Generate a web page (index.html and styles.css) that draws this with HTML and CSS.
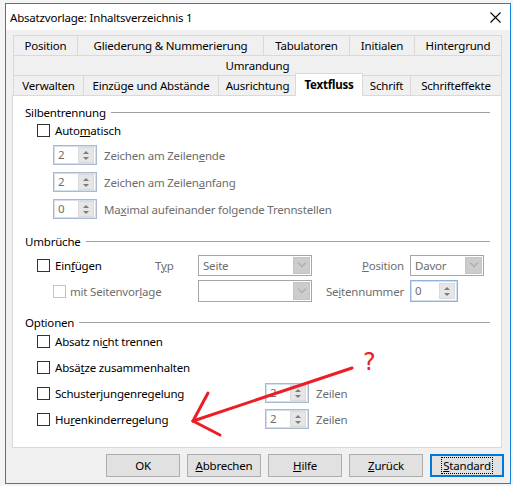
FILE: index.html
```html
<!DOCTYPE html>
<html lang="de">
<head>
<meta charset="utf-8">
<title>Absatzvorlage</title>
<link rel="stylesheet" href="styles.css">
</head>
<body>
<div class="dialog">
  <div class="titlebar">
    <span class="title">Absatzvorlage: Inhaltsverzeichnis 1</span>
    <svg class="close" viewBox="0 0 11 11" width="11" height="11"><path d="M0.5 0.5L10.5 10.5M10.5 0.5L0.5 10.5" stroke="#000" stroke-width="1.1" fill="none"/></svg>
  </div>
  <div class="body">
    <div class="tabs">
      <div class="tabrow r1">
        <div class="tab">Position</div>
        <div class="tab">Gliederung &amp; Nummerierung</div>
        <div class="tab">Tabulatoren</div>
        <div class="tab">Initialen</div>
        <div class="tab">Hintergrund</div>
      </div>
      <div class="tabrow r2">
        <div class="tab">Umrandung</div>
      </div>
      <div class="tabrow r3">
        <div class="tab">Verwalten</div>
        <div class="tab">Einzüge und Abstände</div>
        <div class="tab">Ausrichtung</div>
        <div class="tab sel">Textfluss</div>
        <div class="tab">Schrift</div>
        <div class="tab">Schrifteffekte</div>
      </div>
    </div>
    <div class="panel">
      <div class="group g1">
        <div class="legend"><span>Silbentrennung</span><i class="rule"></i></div>
        <label class="check first"><span class="cb"></span><span>Auto<u>m</u>atisch</span></label>
        <div class="spinrow">
          <div class="spin dis"><span class="val">2</span><span class="btns"><i class="up"></i><i class="dn"></i></span></div>
          <span class="dim">Zeichen am Zeilen<u>e</u>nde</span>
        </div>
        <div class="spinrow">
          <div class="spin dis"><span class="val">2</span><span class="btns"><i class="up"></i><i class="dn"></i></span></div>
          <span class="dim">Zeichen am Zeilen<u>a</u>nfang</span>
        </div>
        <div class="spinrow">
          <div class="spin dis"><span class="val">0</span><span class="btns"><i class="up"></i><i class="dn"></i></span></div>
          <span class="dim">Ma<u>x</u>imal aufeinander folgende Trennstellen</span>
        </div>
      </div>

      <div class="group g2">
        <div class="legend"><span>Umbrüche</span><i class="rule"></i></div>
        <div class="breaks">
          <label class="check"><span class="cb"></span><span>Ein<u>f</u>ügen</span></label>
          <span class="dim typ">T<u>y</u>p</span>
          <div class="combo"><span class="ctext">Seite</span><span class="drop"><i></i></span></div>
          <span class="dim rlabel"><u>P</u>osition</span>
          <div class="combo pos"><span class="ctext">Davor</span><span class="drop"><i></i></span></div>

          <label class="check sub"><span class="cb off"></span><span class="dim">mit Seitenvor<u>l</u>age</span></label>
          <div class="combo tall"><span class="ctext"></span><span class="drop"><i></i></span></div>
          <span class="dim rlabel">Se<u>i</u>tennummer</span>
          <div class="spin focus num"><span class="val">0</span><span class="btns"><i class="up"></i><i class="dn"></i></span></div>
        </div>
      </div>

      <div class="group g3">
        <div class="legend"><span>Optionen</span><i class="rule"></i></div>
        <div class="opts">
          <label class="check"><span class="cb"></span><span>Absatz ni<u>c</u>ht trennen</span></label>
          <label class="check"><span class="cb"></span><span>Absä<u>t</u>ze zusammenhalten</span></label>
          <label class="check"><span class="cb"></span><span>Schusterjungenregelung</span></label>
          <div class="spin dis"><span class="val">2</span><span class="btns"><i class="up"></i><i class="dn"></i></span></div>
          <span class="dim">Zeilen</span>
          <label class="check"><span class="cb"></span><span>Hu<u>r</u>enkinderregelung</span></label>
          <div class="spin dis"><span class="val">2</span><span class="btns"><i class="up"></i><i class="dn"></i></span></div>
          <span class="dim">Zeilen</span>
        </div>
      </div>
    </div>
    <div class="buttons">
      <button class="btn">OK</button>
      <button class="btn"><u>A</u>bbrechen</button>
      <button class="btn"><u>H</u>ilfe</button>
      <button class="btn"><u>Z</u>urück</button>
      <button class="btn default"><span class="focusring"><u>S</u>tandard</span></button>
    </div>
  </div>
</div>
<svg class="annot" width="513" height="486" viewBox="0 0 513 486">
  <g stroke="#ee1c25" stroke-width="3" stroke-linecap="round" fill="none">
    <path d="M352 368L193 421"/>
    <path d="M193 421L208 393"/>
    <path d="M193 421L220 435"/>
  </g>
  <text x="363" y="370" class="qmark">?</text>
</svg>
</body>
</html>
```
FILE: styles.css
```css
* { box-sizing: border-box; }
html, body { margin: 0; padding: 0; }
body {
  width: 513px;
  height: 486px;
  overflow: hidden;
  position: relative;
  background: #f4f4f4;
  font-family: "Noto Sans", "Open Sans", sans-serif;
  font-size: 11.5px;
  letter-spacing: -0.2px;
  color: #000;
}
u { text-decoration: underline; text-underline-offset: 1px; }

.dialog {
  margin: 3px 0 0 5px;
  width: 506px;
  height: 481px;
  border: 1px solid #1883d7;
  background: #f0f0f0;
  display: flex;
  flex-direction: column;
}
.titlebar {
  height: 26px;
  flex: none;
  background: #fff;
  display: flex;
  align-items: center;
  justify-content: space-between;
  padding: 0 9px 0 4px;
}
.title { font-size: 11.5px; }
.close { display: block; margin-top: 1px; }

.body {
  flex: 1;
  padding: 5px 6px 0 6px;
  display: flex;
  flex-direction: column;
}

/* tabs */
.tabs { margin-left: 1px; width: 489px; }
.tabrow { display: grid; height: 20px; }
.r1 { grid-template-columns: 64px 186px 86px 65px 88px; }
.r2 { grid-template-columns: 489px; }
.r3 { grid-template-columns: 70px 135px 78px 66px 48px 92px; }
.tab {
  border-top: 1px solid #d9d9d9;
  border-left: 1px solid #d9d9d9;
  background: #f0f0f0;
  display: flex;
  align-items: center;
  justify-content: center;
  white-space: nowrap;
}
.tab:last-child { border-right: 1px solid #d9d9d9; }
.tab.sel {
  position: relative;
  z-index: 2;
  margin: -2px -1px -1px -1px;
  background: #fff;
  border: 1px solid #d9d9d9;
  border-bottom: none;
  font-weight: bold;
  padding-bottom: 2px;
}

/* panel */
.panel {
  width: 490px;
  height: 353px;
  background: #fff;
  border: 1px solid #d9d9d9;
  padding: 8px 11px 0 12px;
  display: flex;
  flex-direction: column;
}
.legend {
  height: 16px;
  display: flex;
  align-items: center;
  white-space: nowrap;
}
.rule {
  flex: 1;
  height: 1px;
  background: #a0a0a0;
  margin-left: 5px;
  margin-top: 1px;
}
.check {
  display: flex;
  align-items: center;
  gap: 5px;
  height: 20px;
  margin-left: 12px;
  white-space: nowrap;
}
.check.first { height: 16px; margin-top: 2px; }
.cb {
  width: 13px;
  height: 13px;
  border: 1px solid #333;
  background: #fff;
  flex: none;
}
.cb.off { border-color: #c4c4c4; }
.dim { color: #6d6d6d; white-space: nowrap; }

.spinrow {
  display: flex;
  align-items: center;
  gap: 7px;
  height: 20px;
  margin-left: 28px;
  margin-top: 7px;
}
.g1 .spinrow:nth-of-type(1) { margin-top: 9px; }
.spin {
  width: 44px;
  height: 20px;
  border: 1px solid #aab9cd;
  box-shadow: inset 0 0 0 1px #d5dfeb;
  background: #fff;
  display: flex;
  align-items: center;
  padding: 2px 2px 2px 0;
  flex: none;
}
.spin .val { flex: 1; padding-left: 4px; color: #6d6d6d; line-height: 14px; }
.spin.focus { border-color: #92b1d9; box-shadow: inset 0 0 0 1px #cfe0f3; }
.btns {
  width: 16px;
  height: 16px;
  background: #e6e6e6;
  border: 1px solid #dadada;
  display: flex;
  flex-direction: column;
  align-items: center;
  justify-content: center;
  gap: 3px;
}
.btns i { display: block; width: 0; height: 0; border-left: 3px solid transparent; border-right: 3px solid transparent; }
.btns .up { border-bottom: 3px solid #7d7d7d; }
.btns .dn { border-top: 3px solid #7d7d7d; }

.g2 { margin-top: 14px; }
.breaks {
  display: grid;
  grid-template-columns: 130px 43px 114px 92px 6px 74px;
  grid-template-rows: 22px 22px;
  row-gap: 4px;
  margin-top: 5px;
  align-items: center;
}
.breaks .typ { grid-column: 2; }
.breaks .combo { grid-column: 3; }
.breaks .rlabel { grid-column: 4; justify-self: end; }
.breaks .pos, .breaks .num { grid-column: 6; }
.breaks .sub { grid-column: 1 / 3; margin-left: 28px; gap: 4px; }
.breaks .num { width: 48px; height: 22px; }
.combo {
  height: 21px;
  border: 1px solid #a6a6a6;
  background: #fff;
  display: flex;
  align-items: center;
  padding: 1px;
}
.combo.tall { height: 22px; }
.ctext { flex: 1; padding-left: 3px; color: #6d6d6d; }
.drop {
  width: 17px;
  height: 100%;
  background: #cccccc;
  border: 1px solid #c4c4c4;
  display: flex;
  align-items: center;
  justify-content: center;
}
.drop i {
  display: block;
  width: 6px;
  height: 6px;
  border-right: 1px solid #a8a8a8;
  border-bottom: 1px solid #a8a8a8;
  transform: rotate(45deg);
  margin-top: -4px;
}

.g3 { margin-top: 12px; }
.opts {
  display: grid;
  grid-template-columns: 233px 44px auto;
  grid-template-rows: 20px 20px 20px 20px;
  row-gap: 6px;
  column-gap: 7px;
  margin-top: 1px;
  align-items: center;
}
.opts .check { grid-column: 1; }
.opts .spin { grid-column: 2; }

/* buttons */
.buttons {
  display: flex;
  justify-content: flex-end;
  gap: 7px;
  margin-top: 6px;
}
.btn {
  width: 74px;
  height: 23px;
  background: #e1e1e1;
  border: 1px solid #adadad;
  font-family: "Noto Sans", "Open Sans", sans-serif;
  font-size: 11.5px;
  letter-spacing: -0.2px;
  color: #000;
  padding: 0;
  display: flex;
  align-items: center;
  justify-content: center;
}
.btn.default { border: 2px solid #0078d7; }
.focusring {
  outline: 1px dotted #000;
  padding: 0 1px;
  line-height: 15px;
}

.annot {
  position: absolute;
  left: 0;
  top: 0;
  pointer-events: none;
}
.qmark {
  fill: #ee1c25;
  font-family: "DejaVu Sans", sans-serif;
  font-size: 24px;
  letter-spacing: 0;
}
```
